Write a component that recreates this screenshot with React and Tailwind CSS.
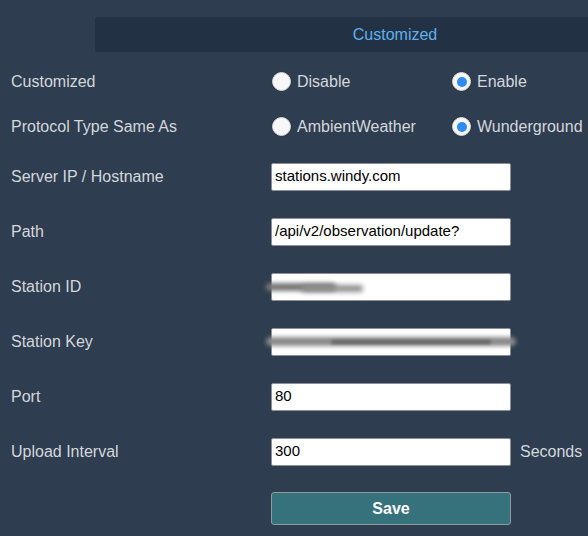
import React from "react";

const font = { fontFamily: '"Liberation Sans", Arial, Helvetica, sans-serif' };

function Radio({ checked, label, className = "" }) {
  return (
    <label className={`flex items-center ${className}`}>
      <span className="ml-[1px] flex h-[19px] w-[19px] items-center justify-center rounded-full border border-[#d9d9d9] bg-[#f7f7f7] shadow-[0_0_1px_rgba(0,0,0,0.4)]">
        {checked && <span className="h-[10px] w-[10px] rounded-full bg-[#2d8df2]" />}
      </span>
      <span className="ml-[6px] text-[16px] text-[#d4d7dc]">{label}</span>
    </label>
  );
}

function RadioRow({ label, options }) {
  return (
    <div className="flex h-[45px] items-center">
      <div className="w-[260px] text-[16px] text-[#d4d7dc]">{label}</div>
      <div className="flex items-center">
        <Radio checked={options[0].checked} label={options[0].label} className="w-[180px]" />
        <Radio checked={options[1].checked} label={options[1].label} />
      </div>
    </div>
  );
}

function InputRow({ label, value, suffix, smudge }) {
  return (
    <div className="flex h-[55px] items-center">
      <div className="w-[260px] text-[16px] text-[#d4d7dc]">{label}</div>
      <div className="relative">
        <div className="flex h-[28px] w-[240px] items-center rounded-[2px] border border-[#8d9197] bg-white pl-[3px] text-[15px] text-black">
          {value}
        </div>
        {smudge === "short" && (
          <>
            <div className="absolute left-[-5px] top-[10px] h-[8px] w-[70px] rounded-full bg-[#777777] blur-[2px]" />
            <div className="absolute left-[30px] top-[12px] h-[7px] w-[62px] rounded-full bg-[#8f8f8f] blur-[2.5px]" />
          </>
        )}
        {smudge === "long" && (
          <>
            <div className="absolute left-[-5px] top-[9px] h-[9px] w-[250px] rounded-full bg-[#8a8a8a] blur-[2px]" />
            <div className="absolute left-[60px] top-[12px] h-[4px] w-[160px] rounded-full bg-[#666666] blur-[1.5px]" />
          </>
        )}
      </div>
      {suffix && <span className="ml-[9px] text-[16px] text-[#d4d7dc]">{suffix}</span>}
    </div>
  );
}

export default function App() {
  return (
    <div className="h-[536px] w-full overflow-hidden bg-[#2e3d4f]" style={font}>
      <div className="ml-[95px] mt-[17px] flex h-[35px] w-[600px] items-center justify-center rounded-[2px] bg-[#223244] text-[16px] text-[#5fb1ee]">
        Customized
      </div>
      <div className="mt-[7px] pl-[11px]">
        <RadioRow
          label="Customized"
          options={[
            { label: "Disable", checked: false },
            { label: "Enable", checked: true },
          ]}
        />
        <RadioRow
          label="Protocol Type Same As"
          options={[
            { label: "AmbientWeather", checked: false },
            { label: "Wunderground", checked: true },
          ]}
        />
        <InputRow label="Server IP / Hostname" value="stations.windy.com" />
        <InputRow label="Path" value="/api/v2/observation/update?" />
        <InputRow label="Station ID" value="" smudge="short" />
        <InputRow label="Station Key" value="" smudge="long" />
        <InputRow label="Port" value="80" />
        <InputRow label="Upload Interval" value="300" suffix="Seconds" />
        <div className="mt-[13px] flex">
          <div className="w-[260px]" />
          <button className="h-[33px] w-[240px] rounded-[3px] border border-[#8e9ca2] bg-[#36727b] text-[16px] font-semibold text-white">
            Save
          </button>
        </div>
      </div>
    </div>
  );
}
